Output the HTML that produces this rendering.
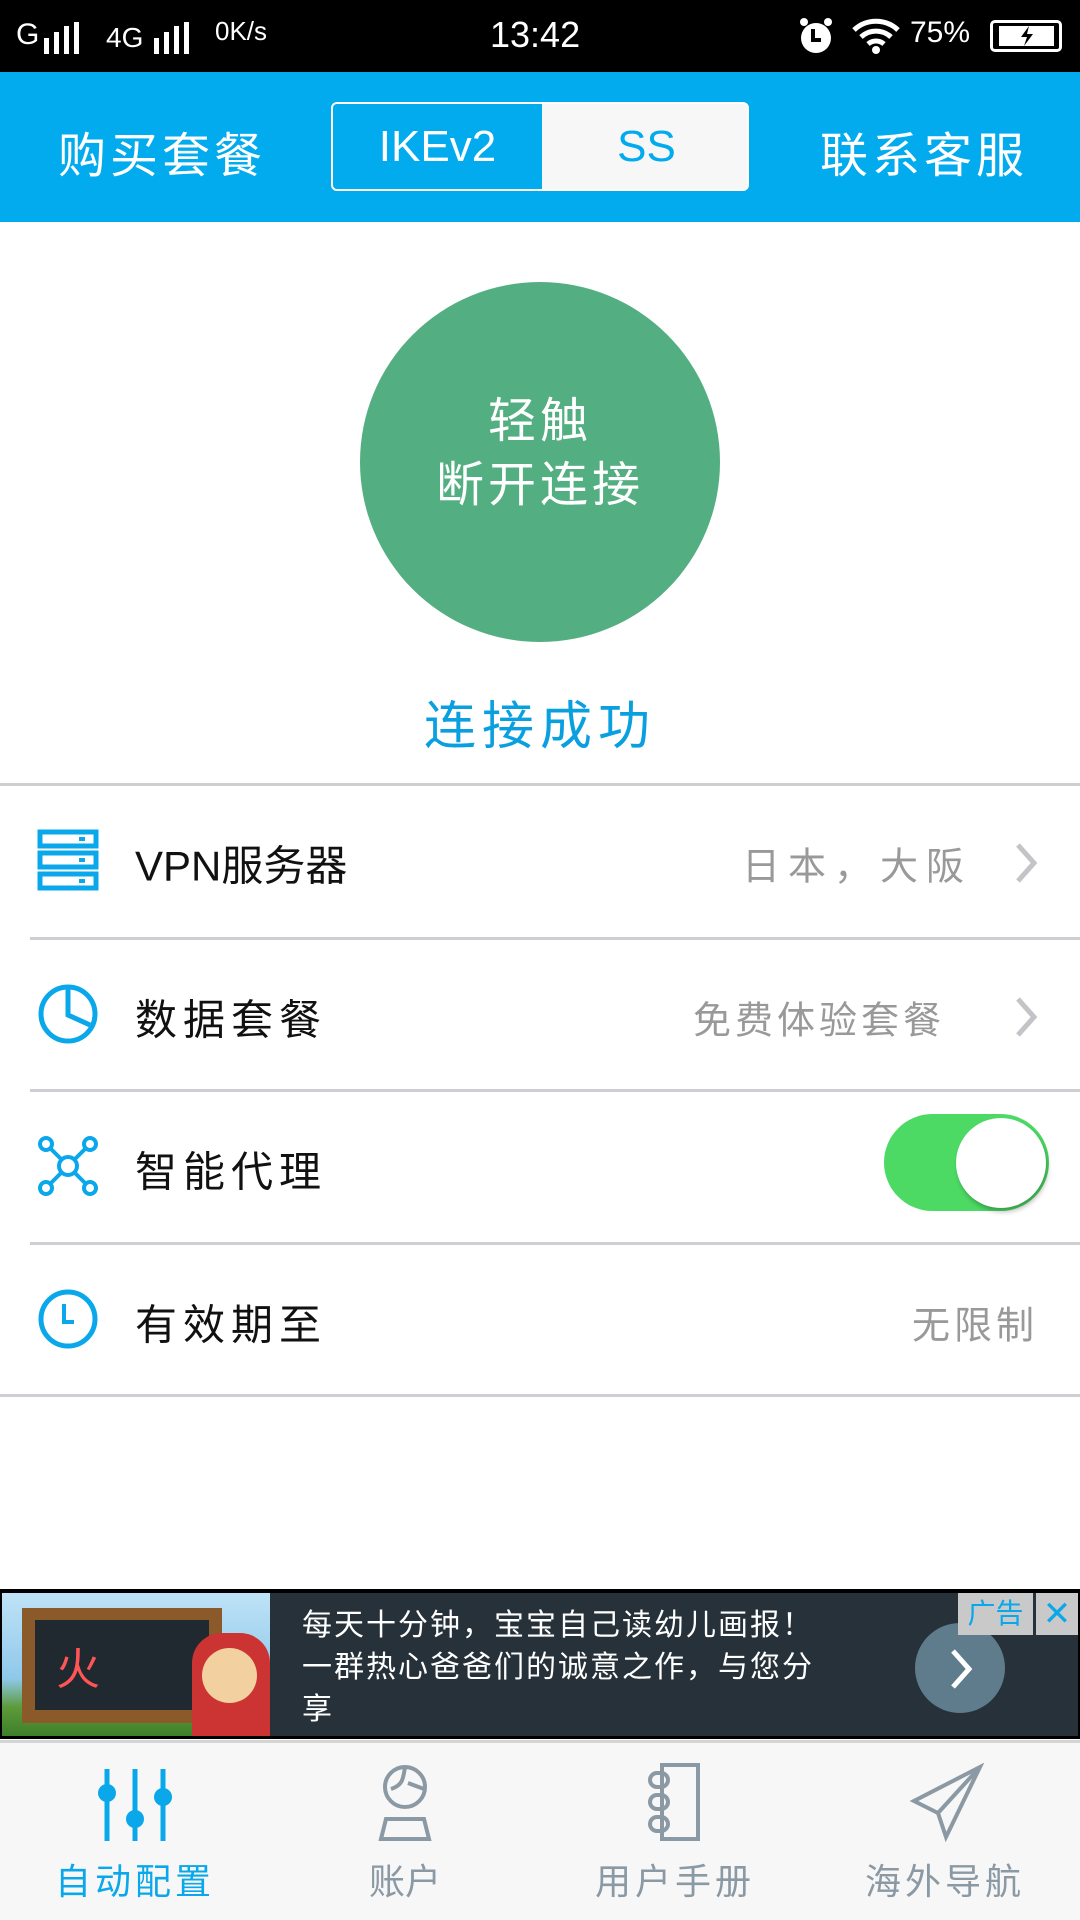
<!DOCTYPE html>
<html><head><meta charset="utf-8"><style>
*{margin:0;padding:0;box-sizing:border-box}
body{width:1080px;height:1920px;position:relative;background:#fff;font-family:"Liberation Sans","Noto Sans CJK SC",sans-serif;overflow:hidden}
.a{position:absolute}
.sb{left:0;top:0;width:1080px;height:72px;background:#000;color:#fff}
.hd{left:0;top:72px;width:1080px;height:150px;background:#02aaee;color:#fff}
.row{left:0;width:1080px;height:153px}
.lbl{left:135px;font-size:42px;color:#111;top:50%;transform:translateY(-50%)}
.val{font-size:38px;color:#999;top:50%;transform:translateY(-50%)}
.sep{height:3px;background:#cfcfd3}
.tab{top:1741px;width:270px;height:179px;text-align:center}
.tab span{position:absolute;left:0;right:0;top:112px;font-size:36px;color:#8a99a4}
</style></head><body>
<div class="a sb">
 <div class="a" style="left:16px;top:18px;font-size:30px">G</div>
 <svg class="a" style="left:42px;top:22px" width="48" height="32"><rect x="2" y="16" width="5" height="16" fill="#fff"/><rect x="12" y="10" width="5" height="22" fill="#fff"/><rect x="22" y="4" width="5" height="28" fill="#fff"/><rect x="32" y="0" width="5" height="32" fill="#fff"/></svg>
 <div class="a" style="left:106px;top:22px;font-size:28px">4G</div>
 <svg class="a" style="left:152px;top:22px" width="48" height="32"><rect x="2" y="16" width="5" height="16" fill="#fff"/><rect x="12" y="10" width="5" height="22" fill="#fff"/><rect x="22" y="4" width="5" height="28" fill="#fff"/><rect x="32" y="0" width="5" height="32" fill="#fff"/></svg>
 <div class="a" style="left:215px;top:16px;font-size:26px">0K/s</div>
 <div class="a" style="left:490px;top:14px;font-size:36px">13:42</div>
 <svg class="a" style="left:798px;top:16px" width="36" height="40"><circle cx="18" cy="22" r="15" fill="#fff"/><path d="M15 13v11h8" stroke="#000" stroke-width="4" fill="none"/><circle cx="6" cy="6" r="4" fill="#fff"/><circle cx="30" cy="6" r="4" fill="#fff"/></svg>
 <svg class="a" style="left:852px;top:18px" width="48" height="36"><path d="M2 12a32 32 0 0 1 44 0M9 19a22 22 0 0 1 30 0M16 26a12 12 0 0 1 16 0" stroke="#fff" stroke-width="5" fill="none"/><circle cx="24" cy="32" r="4" fill="#fff"/></svg>
 <div class="a" style="left:910px;top:16px;font-size:30px">75%</div>
 <div class="a" style="left:990px;top:20px;width:72px;height:32px;border:3px solid #fff;border-radius:5px"><div class="a" style="left:6px;top:3px;width:55px;height:20px;background:#fff"></div><svg class="a" style="left:24px;top:3px" width="20" height="20"><path d="M12 0L4 11h6l-3 9 9-12h-6z" fill="#000"/></svg></div>
</div>
<div class="a hd">
 <div class="a" style="left:58px;top:44px;font-size:48px;letter-spacing:4px">购买套餐</div>
 <div class="a" style="left:331px;top:30px;width:418px;height:89px;border:2px solid #fff;border-radius:6px;background:#f7f7f7;overflow:hidden">
  <div class="a" style="left:0;top:0;width:209px;height:89px;background:#02aaee;color:#fff;font-size:44px;text-align:center;line-height:85px">IKEv2</div>
  <div class="a" style="left:209px;top:0;width:209px;height:89px;color:#02aaee;font-size:44px;text-align:center;line-height:85px">SS</div>
 </div>
 <div class="a" style="left:820px;top:44px;font-size:48px;letter-spacing:4px">联系客服</div>
</div>
<div class="a" style="left:360px;top:282px;width:360px;height:360px;border-radius:50%;background:#53af81;color:#fff;text-align:center;font-size:48px;line-height:64px;padding-top:108px;letter-spacing:4px">轻触<br>断开连接</div>
<div class="a" style="left:0;width:1080px;top:684px;text-align:center;font-size:52px;color:#0aa0e0;letter-spacing:6px">连接成功</div>
<div class="a sep" style="left:0;top:783px;width:1080px"></div>
<div class="a row" style="top:786px">
 <svg class="a" style="left:37px;top:43px" width="62" height="62"><g fill="none" stroke="#0aa8ea" stroke-width="5"><rect x="3" y="3" width="56" height="14"/><rect x="3" y="24" width="56" height="14"/><rect x="3" y="45" width="56" height="14"/></g><g fill="#0aa8ea"><rect x="42" y="8" width="6" height="4"/><rect x="42" y="29" width="6" height="4"/><rect x="42" y="50" width="6" height="4"/></g></svg>
 <div class="a lbl">VPN服务器</div>
 <div class="a val" style="left:742px;letter-spacing:8px">日本，大阪</div>
 <svg class="a" style="left:1012px;top:56px" width="30" height="42"><path d="M6 3l16 18L6 39" stroke="#c4c4c8" stroke-width="5" fill="none"/></svg>
</div>
<div class="a sep" style="left:30px;top:937px;width:1050px"></div>
<div class="a row" style="top:940px">
 <svg class="a" style="left:37px;top:43px" width="62" height="62"><circle cx="31" cy="31" r="27" fill="none" stroke="#0aa8ea" stroke-width="5"/><path d="M31 4v28l22 10" stroke="#0aa8ea" stroke-width="5" fill="none"/></svg>
 <div class="a lbl" style="letter-spacing:6px">数据套餐</div>
 <div class="a val" style="left:693px;letter-spacing:4px">免费体验套餐</div>
 <svg class="a" style="left:1012px;top:56px" width="30" height="42"><path d="M6 3l16 18L6 39" stroke="#c4c4c8" stroke-width="5" fill="none"/></svg>
</div>
<div class="a sep" style="left:30px;top:1089px;width:1050px"></div>
<div class="a row" style="top:1092px">
 <svg class="a" style="left:37px;top:43px" width="62" height="62"><g fill="none" stroke="#0aa8ea" stroke-width="4"><circle cx="9" cy="9" r="6"/><circle cx="53" cy="9" r="6"/><circle cx="9" cy="53" r="6"/><circle cx="53" cy="53" r="6"/><circle cx="31" cy="31" r="9"/><path d="M13 13l11 11M49 13L38 24M13 49l11-11M49 49L38 38"/></g></svg>
 <div class="a lbl" style="letter-spacing:6px">智能代理</div>
 <div class="a" style="left:884px;top:22px;width:165px;height:97px;border-radius:49px;background:#4cd964"></div>
 <div class="a" style="left:956px;top:26px;width:90px;height:90px;border-radius:50%;background:#fff;box-shadow:2px 4px 5px rgba(0,0,0,.25)"></div>
</div>
<div class="a sep" style="left:30px;top:1242px;width:1050px"></div>
<div class="a row" style="top:1245px">
 <svg class="a" style="left:37px;top:43px" width="62" height="62"><circle cx="31" cy="31" r="27" fill="none" stroke="#0aa8ea" stroke-width="5"/><path d="M27 16v18h10" stroke="#0aa8ea" stroke-width="4" fill="none"/></svg>
 <div class="a lbl" style="letter-spacing:6px">有效期至</div>
 <div class="a val" style="left:912px;letter-spacing:4px">无限制</div>
</div>
<div class="a sep" style="left:0;top:1394px;width:1080px"></div>
<div class="a" style="left:0;top:1589px;width:1080px;height:150px;background:#000"></div>
<div class="a" style="left:2px;top:1593px;width:1076px;height:143px;background:#263139;overflow:hidden">
 <div class="a" style="left:0;top:0;width:268px;height:143px;background:linear-gradient(#bfe3f7,#8fc8ea 60%,#5c9a3a 80%,#3f7f2a)"></div>
 <div class="a" style="left:20px;top:15px;width:200px;height:115px;background:#8a5a2b"></div>
 <div class="a" style="left:33px;top:27px;width:174px;height:90px;background:#202830"></div>
 <div class="a" style="left:54px;top:40px;font-size:44px;color:#f55">火</div>
 <div class="a" style="left:190px;top:40px;width:78px;height:103px;border-radius:30px 30px 0 0;background:#c33"></div>
 <div class="a" style="left:200px;top:55px;width:55px;height:55px;border-radius:50%;background:#f2d0a0"></div>
 <div class="a" style="left:300px;top:12px;font-size:30px;line-height:42px;color:#fff;width:600px;letter-spacing:2px">每天十分钟，宝宝自己读幼儿画报！<br>一群热心爸爸们的诚意之作，与您分<br>享</div>
 <div class="a" style="left:913px;top:30px;width:90px;height:90px;border-radius:50%;background:#5e7c8b"></div>
 <svg class="a" style="left:945px;top:55px" width="30" height="42"><path d="M6 3l16 18L6 39" stroke="#fff" stroke-width="5" fill="none"/></svg>
 <div class="a" style="left:956px;top:0;width:75px;height:42px;background:#c9c9c9;color:#0aa8ea;font-size:28px;text-align:center;line-height:42px">广告</div>
 <div class="a" style="left:1034px;top:0;width:42px;height:42px;background:#c9c9c9;color:#0aa8ea;font-size:34px;text-align:center;line-height:42px">✕</div>
</div>
<div class="a" style="left:0;top:1740px;width:1080px;height:180px;background:#f7f7f7;border-top:3px solid #d4d4d4"></div>
<div class="a tab" style="left:0">
 <svg class="a" style="left:95px;top:22px" width="80" height="80"><g stroke="#0aa8ea" stroke-width="5"><path d="M12 6v72M40 6v72M68 6v72"/></g><g fill="#0aa8ea"><circle cx="12" cy="30" r="9"/><circle cx="40" cy="56" r="9"/><circle cx="68" cy="34" r="9"/></g></svg>
 <span style="color:#0aa8ea;letter-spacing:4px">自动配置</span>
</div>
<div class="a tab" style="left:270px">
 <svg class="a" style="left:100px;top:22px" width="70" height="80"><g fill="none" stroke="#8a99a4" stroke-width="4"><circle cx="35" cy="24" r="20"/><path d="M35 4c-2 12-2 18-14 22M38 20l16 6"/><path d="M16 56h38l5 20H11z"/></g></svg>
 <span>账户</span>
</div>
<div class="a tab" style="left:540px">
 <svg class="a" style="left:100px;top:22px" width="70" height="80"><g fill="none" stroke="#8a99a4" stroke-width="4"><rect x="22" y="2" width="36" height="74"/><rect x="10" y="10" width="18" height="14" rx="7"/><rect x="10" y="32" width="18" height="14" rx="7"/><rect x="10" y="54" width="18" height="14" rx="7"/></g></svg>
 <span style="letter-spacing:4px">用户手册</span>
</div>
<div class="a tab" style="left:810px">
 <svg class="a" style="left:98px;top:22px" width="80" height="80"><g fill="none" stroke="#8a99a4" stroke-width="4"><path d="M72 4L6 38l24 12 8 24z"/><path d="M72 4L30 50"/></g></svg>
 <span style="letter-spacing:4px">海外导航</span>
</div>
</body></html>
